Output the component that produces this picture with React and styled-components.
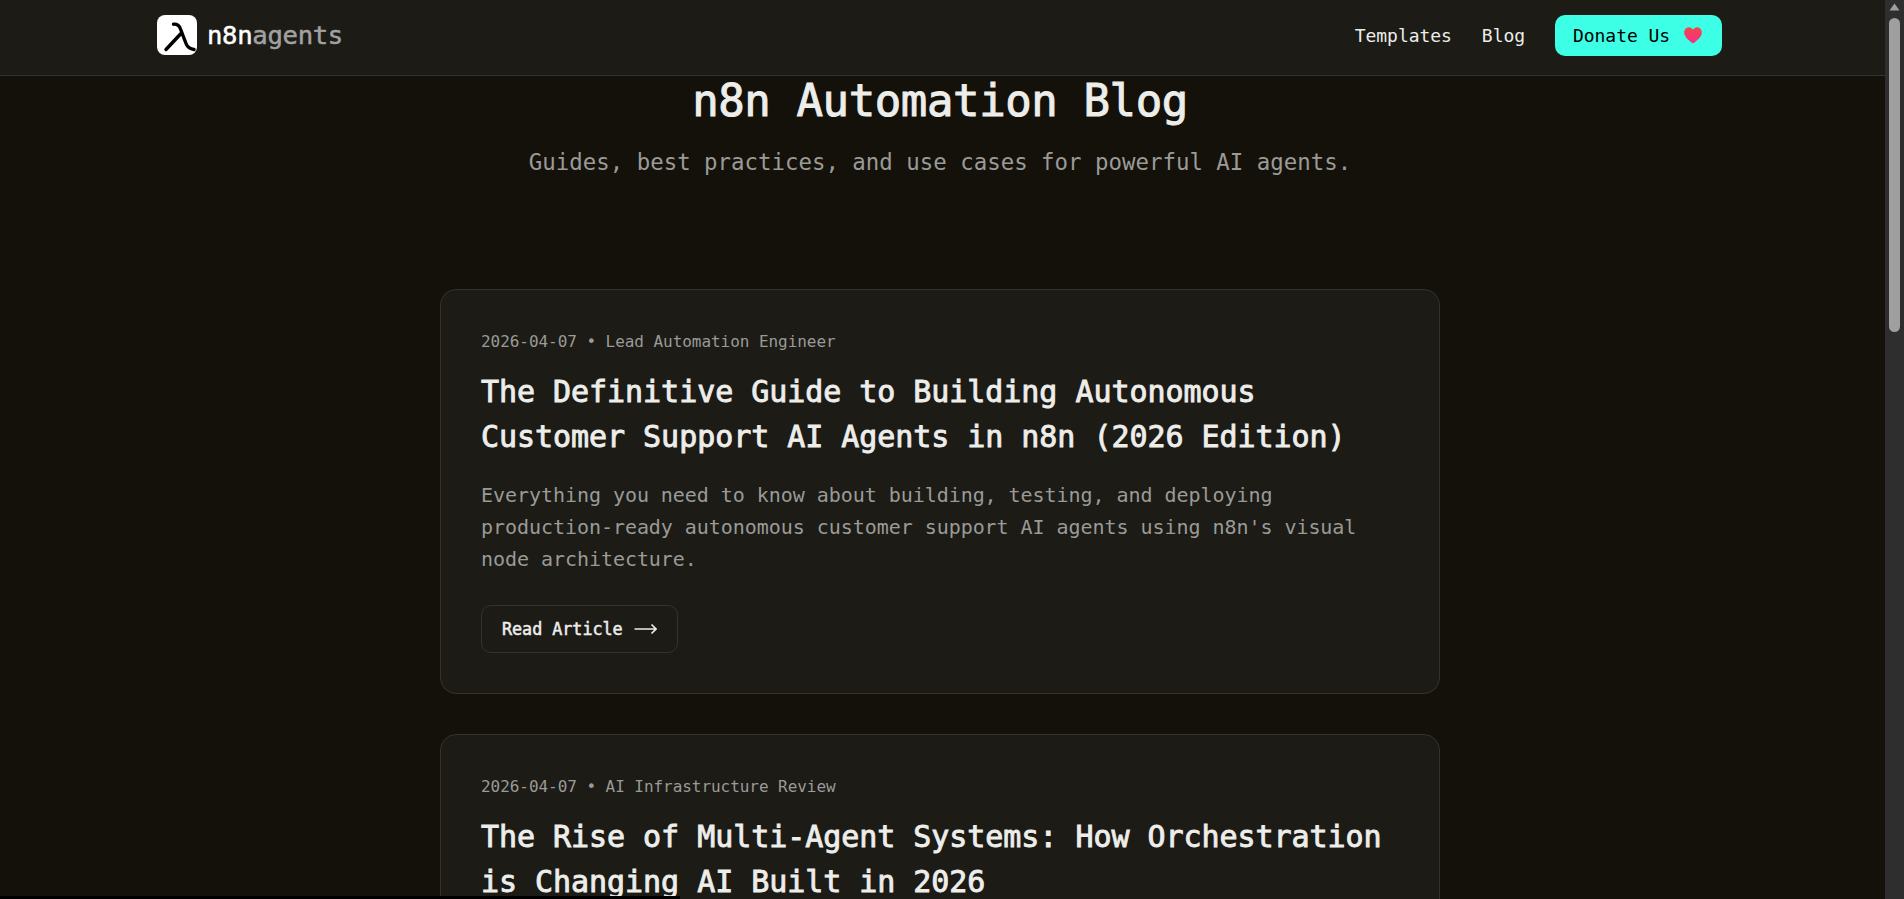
import styled, { createGlobalStyle, css } from 'styled-components';

const posts = [
  {
    date: '2026-04-07',
    author: 'Lead Automation Engineer',
    title: 'The Definitive Guide to Building Autonomous Customer Support AI Agents in n8n (2026 Edition)',
    excerpt:
      "Everything you need to know about building, testing, and deploying production-ready autonomous customer support AI agents using n8n's visual node architecture.",
  },
  {
    date: '2026-04-07',
    author: 'AI Infrastructure Review',
    title: 'The Rise of Multi-Agent Systems: How Orchestration is Changing AI Built in 2026',
    excerpt:
      'A look at how teams coordinate specialized agents, share memory between them, and keep long running workflows observable in production.',
  },
];

function LambdaLogo() {
  return (
    <LogoBox>
      <svg width="40" height="40" viewBox="0 0 40 40" fill="none">
        <path
          d="M16.5 9.2C20.5 8.8 22.3 10.5 23.5 14L29 28.5C30.5 32.5 33 34 37 34.5M24 18.5L9 34.5"
          stroke="#000"
          strokeWidth="3.4"
          strokeLinecap="round"
          strokeLinejoin="round"
        />
      </svg>
    </LogoBox>
  );
}

function HeartIcon() {
  return (
    <svg width="18" height="17" viewBox="0 0 18 17">
      <defs>
        <linearGradient id="heartFill" x1="0" y1="0" x2="0" y2="1">
          <stop offset="0" stopColor="#f2464f" />
          <stop offset="1" stopColor="#f72d86" />
        </linearGradient>
      </defs>
      <path
        d="M9 16.5C4 12.6 0.2 9.6 0.2 5.4C0.2 2.4 2.4 0.3 5 0.3C6.7 0.3 8.1 1.2 9 2.7C9.9 1.2 11.3 0.3 13 0.3C15.6 0.3 17.8 2.4 17.8 5.4C17.8 9.6 14 12.6 9 16.5Z"
        fill="url(#heartFill)"
      />
    </svg>
  );
}

function ArrowIcon() {
  return (
    <svg width="23" height="12" viewBox="0 0 23 12" fill="none">
      <path d="M0.5 6H22M17.5 1.5L22 6L17.5 10.5" stroke="#ededea" strokeWidth="1.6" />
    </svg>
  );
}

function ScrollArrow() {
  return (
    <svg width="11" height="8" viewBox="0 0 11 8">
      <path d="M5.5 0.5L10.5 7.5H0.5Z" fill="#9f9f9f" />
    </svg>
  );
}

export default function App() {
  return (
    <>
      <GlobalStyle />
      <Header>
        <HeaderInner>
          <Brand href="#">
            <LambdaLogo />
            <BrandText>
              n8n<BrandMuted>agents</BrandMuted>
            </BrandText>
          </Brand>
          <Nav>
            <NavLink href="#">Templates</NavLink>
            <NavLink href="#">Blog</NavLink>
            <DonateButton href="#">
              Donate Us
              <HeartIcon />
            </DonateButton>
          </Nav>
        </HeaderInner>
      </Header>
      <Main>
        <Title>n8n Automation Blog</Title>
        <Subtitle>Guides, best practices, and use cases for powerful AI agents.</Subtitle>
        <PostList>
          {posts.map((post) => (
            <PostCard key={post.title}>
              <PostMeta>
                {post.date} • {post.author}
              </PostMeta>
              <PostTitle>{post.title}</PostTitle>
              <PostExcerpt>{post.excerpt}</PostExcerpt>
              <ReadButton href="#">
                Read Article
                <ArrowIcon />
              </ReadButton>
            </PostCard>
          ))}
        </PostList>
      </Main>
      <ProgressBar />
      <ScrollTrack>
        <ScrollArrow />
        <ScrollThumb />
      </ScrollTrack>
    </>
  );
}

// DejaVu Bold is heavier than the look we want, so thicken the regular cut instead
const semibold = (amount) => css`
  font-weight: 400;
  -webkit-text-stroke: ${amount}px currentColor;
`;

const GlobalStyle = createGlobalStyle`
  * {
    box-sizing: border-box;
  }
  body {
    margin: 0;
    padding-right: 19px;
    background: #14110b;
    color: #ededea;
    font-family: "DejaVu Sans Mono", "Liberation Mono", monospace;
    letter-spacing: -0.05px;
  }
`;

const Header = styled.header`
  position: sticky;
  top: 0;
  z-index: 10;
  height: 76px;
  padding: 0 6px 5px 0;
  background: #1c1b16;
  border-bottom: 1px solid #33322e;
`;

const HeaderInner = styled.div`
  max-width: 1565px;
  height: 100%;
  margin: 0 auto;
  display: flex;
  align-items: center;
  justify-content: space-between;
`;

const Brand = styled.a`
  display: flex;
  align-items: center;
  gap: 10px;
  text-decoration: none;
`;

const LogoBox = styled.div`
  width: 40px;
  height: 40px;
  border-radius: 8px;
  background: #fff;
`;

const BrandText = styled.span`
  font-size: 25.6px;
  letter-spacing: -0.3px;
  color: #fff;
  ${semibold(0.5)}
`;

const BrandMuted = styled.span`
  color: #a1a1a1;
`;

const Nav = styled.nav`
  display: flex;
  align-items: center;
  gap: 30px;
`;

const NavLink = styled.a`
  font-size: 18px;
  color: #ededea;
  text-decoration: none;
`;

const DonateButton = styled.a`
  display: flex;
  align-items: center;
  gap: 14px;
  width: 167px;
  height: 41px;
  padding-left: 18px;
  border-radius: 10px;
  background: #3dffe6;
  color: #000;
  font-size: 18px;
  text-decoration: none;
`;

const Main = styled.main`
  max-width: 1005px;
  margin: 0 auto;
  padding-right: 5px;
`;

const Title = styled.h1`
  margin: 0;
  font-size: 44px;
  line-height: 50px;
  letter-spacing: -0.4px;
  text-align: center;
  ${semibold(1)}
`;

const Subtitle = styled.p`
  margin: 22px 0 0;
  font-size: 22.4px;
  line-height: 28px;
  letter-spacing: 0;
  color: #9a9a97;
  text-align: center;
`;

const PostList = styled.div`
  margin-top: 113px;
  display: flex;
  flex-direction: column;
  gap: 40px;
  padding-bottom: 80px;
`;

const PostCard = styled.article`
  padding: 40px;
  background: #1c1b16;
  border: 1px solid #33322e;
  border-radius: 16px;
`;

const PostMeta = styled.div`
  font-size: 16px;
  line-height: 24px;
  color: #9a9a97;
`;

const PostTitle = styled.h2`
  margin: 15px 0 0;
  font-size: 30px;
  line-height: 45px;
  color: #ededea;
  ${semibold(0.9)}
`;

const PostExcerpt = styled.p`
  margin: 20px 0 0;
  font-size: 20px;
  line-height: 32px;
  color: #9a9a97;
`;

const ReadButton = styled.a`
  display: inline-flex;
  align-items: center;
  gap: 11px;
  margin-top: 30px;
  height: 48px;
  padding: 0 20px;
  border: 1px solid #33322e;
  border-radius: 10px;
  color: #ededea;
  font-size: 16.8px;
  text-decoration: none;
  ${semibold(0.5)}
`;

const ProgressBar = styled.div`
  position: fixed;
  left: 0;
  bottom: 0;
  z-index: 20;
  width: 680px;
  height: 3px;
  background: #000;
`;

const ScrollTrack = styled.div`
  position: fixed;
  top: 0;
  right: 0;
  bottom: 0;
  z-index: 30;
  width: 19px;
  padding-top: 3px;
  display: flex;
  flex-direction: column;
  align-items: center;
  gap: 7px;
  background: #2e2e2e;
`;

const ScrollThumb = styled.div`
  width: 11px;
  height: 314px;
  border-radius: 6px;
  background: #9f9f9f;
`;
